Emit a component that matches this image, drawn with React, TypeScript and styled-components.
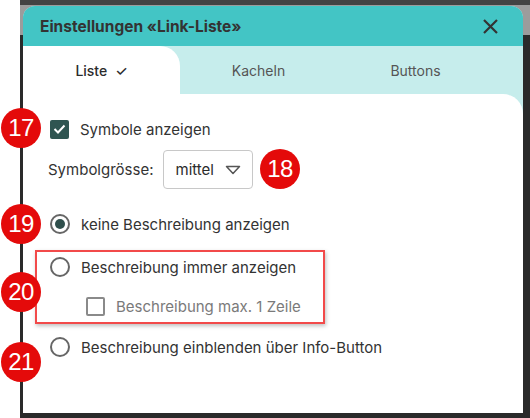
import React from "react";
import styled, { createGlobalStyle } from "styled-components";

const GlobalStyle = createGlobalStyle`
  html, body {
    margin: 0;
    padding: 0;
    background: #ffffff;
  }
  body {
    font-family: "Inter", "Noto Sans", sans-serif;
    color: #333333;
  }
`;

const Frame = styled.div`
  position: relative;
  margin-left: 20px;
  width: 510px;
  height: 418px;
  padding: 6px 7px 5px 3px;
  box-sizing: border-box;
  background: linear-gradient(
    to bottom,
    #434343 0 5px,
    #9c9c9c 5px 35px,
    #2a2a2a 35px
  );
  display: flex;
`;

const Modal = styled.div`
  width: 500px;
  display: flex;
  flex-direction: column;
  background: #c6edec;
  border-radius: 12px 12px 0 0;
`;

const Header = styled.div`
  height: 40px;
  display: flex;
  align-items: center;
  justify-content: space-between;
  padding: 0 25px 0 17px;
  background: #43c5c5;
  border-radius: 12px 12px 0 0;
`;

const Title = styled.h1`
  margin: 0;
  font-size: 15.5px;
  font-weight: 700;
  color: #333333;
`;

const CloseButton = styled.button`
  border: 0;
  padding: 0;
  background: none;
  display: flex;
  cursor: pointer;
`;

const TabStrip = styled.div`
  height: 48px;
  display: flex;
  background: #c6edec;
  border-top-right-radius: 20px;
  position: relative;
  &::before {
    content: "";
    position: absolute;
    inset: 0;
    z-index: -1;
    background: #43c5c5;
  }
`;

const Tab = styled.div<{ $active?: boolean }>`
  width: 157px;
  display: flex;
  align-items: center;
  justify-content: center;
  gap: 8px;
  font-size: 14px;
  font-weight: ${(p) => (p.$active ? 500 : 400)};
  color: ${(p) => (p.$active ? "#2b2b2b" : "#555555")};
  background: ${(p) => (p.$active ? "#ffffff" : "transparent")};
  border-top-right-radius: ${(p) => (p.$active ? "20px" : "0")};
`;

const Panel = styled.div`
  flex: 1;
  background: #ffffff;
  border-top-right-radius: 20px;
  padding: 20px 0 0 27px;
  display: flex;
  flex-direction: column;
  font-size: 15px;
`;

const Row = styled.div<{ $gap?: number; $indent?: number }>`
  height: 30px;
  display: flex;
  align-items: center;
  gap: 11px;
  margin-top: ${(p) => p.$gap ?? 0}px;
  padding-left: ${(p) => p.$indent ?? 0}px;
`;

const SelectRow = styled.div`
  height: 39px;
  margin-top: 6px;
  display: flex;
  align-items: center;
  gap: 9px;
  margin-left: -2px;
`;

const Label = styled.span<{ $muted?: boolean }>`
  color: ${(p) => (p.$muted ? "#7a7a7a" : "#333333")};
`;

const Box = styled.span<{ $checked?: boolean }>`
  width: 19px;
  height: 19px;
  box-sizing: border-box;
  border-radius: 2px;
  display: flex;
  align-items: center;
  justify-content: center;
  background: ${(p) => (p.$checked ? "#2f5551" : "#ffffff")};
  border: ${(p) => (p.$checked ? "0" : "2px solid #8a8a8a")};
`;

const Radio = styled.span<{ $checked?: boolean }>`
  width: 20px;
  height: 20px;
  box-sizing: border-box;
  border-radius: 50%;
  border: 2px solid #666666;
  display: flex;
  align-items: center;
  justify-content: center;
  &::after {
    content: "";
    width: 10px;
    height: 10px;
    border-radius: 50%;
    background: ${(p) => (p.$checked ? "#2f4f4c" : "transparent")};
  }
`;

const Select = styled.div`
  width: 90px;
  flex-shrink: 0;
  height: 39px;
  box-sizing: border-box;
  border: 1px solid #c8c8c8;
  border-radius: 4px;
  display: flex;
  align-items: center;
  gap: 11px;
  padding-left: 12px;
  color: #2b2b2b;
`;

const Group = styled.div`
  width: 290px;
  box-sizing: border-box;
  margin: 11px 0 0 -15px;
  padding: 0 0 1px 13px;
  border: 2px solid #f24a4a;
  box-shadow: 1px 2px 4px rgba(0, 0, 0, 0.25);
`;

const Badge = styled.div<{ $x: number; $y: number }>`
  position: absolute;
  left: ${(p) => p.$x}px;
  top: ${(p) => p.$y}px;
  width: 40px;
  height: 40px;
  border-radius: 50%;
  background: #e40a0a;
  color: #ffffff;
  font-family: "Liberation Sans", Arial, sans-serif;
  font-size: 24px;
  display: flex;
  align-items: center;
  justify-content: center;
  letter-spacing: -0.5px;
`;

const CheckIcon = () => (
  <svg width="13" height="10" viewBox="0 0 13 10">
    <path d="M1.5 5 L5 8.5 L11.5 1.5" fill="none" stroke="#ffffff" strokeWidth="2" />
  </svg>
);

const badges = [
  { n: "17", x: 1, y: 108 },
  { n: "18", x: 260, y: 149 },
  { n: "19", x: 1, y: 204 },
  { n: "20", x: 1, y: 272 },
  { n: "21", x: 1, y: 342 },
];

export default function App() {
  return (
    <>
      <GlobalStyle />
      <Frame>
        <Modal>
          <Header>
            <Title>Einstellungen «Link-Liste»</Title>
            <CloseButton aria-label="Schliessen">
              <svg width="15" height="15" viewBox="0 0 15 15">
                <path d="M1 1 L14 14 M14 1 L1 14" stroke="#333333" strokeWidth="2.2" />
              </svg>
            </CloseButton>
          </Header>
          <TabStrip>
            <Tab $active>
              Liste <span>✓</span>
            </Tab>
            <Tab>Kacheln</Tab>
            <Tab>Buttons</Tab>
          </TabStrip>
          <Panel>
            <Row>
              <Box $checked>
                <CheckIcon />
              </Box>
              <Label>Symbole anzeigen</Label>
            </Row>
            <SelectRow>
              <Label>Symbolgrösse:</Label>
              <Select>
                mittel
                <svg width="16" height="10" viewBox="0 0 16 10">
                  <path d="M1.5 1.5 H14.5 L8 8.5 Z" fill="none" stroke="#555555" strokeWidth="1.5" strokeLinejoin="round" />
                </svg>
              </Select>
            </SelectRow>
            <Row $gap={20}>
              <Radio $checked />
              <Label>keine Beschreibung anzeigen</Label>
            </Row>
            <Group>
              <Row>
                <Radio />
                <Label>Beschreibung immer anzeigen</Label>
              </Row>
              <Row $gap={9} $indent={36}>
                <Box />
                <Label $muted>Beschreibung max. 1 Zeile</Label>
              </Row>
            </Group>
            <Row $gap={8}>
              <Radio />
              <Label>Beschreibung einblenden über Info-Button</Label>
            </Row>
          </Panel>
        </Modal>
        {badges.map((b) => (
          <Badge key={b.n} $x={b.x - 20} $y={b.y}>
            {b.n}
          </Badge>
        ))}
      </Frame>
    </>
  );
}
